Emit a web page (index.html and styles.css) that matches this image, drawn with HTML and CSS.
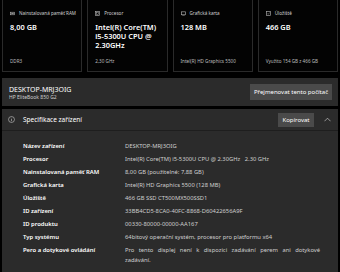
FILE: index.html
```html
<!DOCTYPE html>
<html lang="cs">
<head>
    <meta charset="UTF-8">
    <title>Informace o systému</title>
    <link rel="stylesheet" href="styles.css">
</head>
<body>

    <!-- Summary cards -->
    <div class="cards">
        <div class="card">
            <div class="card-label">
                <svg class="card-icon" viewBox="0 0 6 6"><rect x="0.5" y="1.5" width="5" height="3" fill="none" stroke="#aaa" stroke-width="0.8"/><rect x="1.5" y="2.5" width="3" height="1" fill="#aaa"/></svg>
                Nainstalovaná paměť RAM
            </div>
            <div class="card-value">8,00 GB</div>
            <div class="card-foot">DDR3</div>
        </div>
        <div class="card">
            <div class="card-label">
                <svg class="card-icon" viewBox="0 0 6 6"><rect x="0.5" y="0.5" width="5" height="5" fill="none" stroke="#aaa" stroke-width="0.8"/><rect x="2" y="2" width="2" height="2" fill="none" stroke="#aaa" stroke-width="0.6"/></svg>
                Procesor
            </div>
            <div class="card-value">Intel(R) Core(TM) i5-5300U CPU @ 2.30GHz</div>
            <div class="card-foot">2,30 GHz</div>
        </div>
        <div class="card">
            <div class="card-label">
                <svg class="card-icon" viewBox="0 0 6 6"><rect x="0.5" y="1" width="5" height="3.5" fill="none" stroke="#aaa" stroke-width="0.8"/><line x1="1.5" y1="5.5" x2="4.5" y2="5.5" stroke="#aaa" stroke-width="0.6"/></svg>
                Grafická karta
            </div>
            <div class="card-value">128 MB</div>
            <div class="card-foot">Intel(R) HD Graphics 5500</div>
        </div>
        <div class="card">
            <div class="card-label">
                <svg class="card-icon" viewBox="0 0 6 6"><rect x="0.5" y="0.5" width="5" height="5" fill="none" stroke="#aaa" stroke-width="0.8"/><path d="M1.6 3 L2.6 4 L4.4 1.8" fill="none" stroke="#aaa" stroke-width="0.6"/></svg>
                Úložiště
            </div>
            <div class="card-value">466 GB</div>
            <div class="card-foot">Využito 154 GB z 466 GB</div>
        </div>
    </div>

    <!-- Rename bar -->
    <div class="rename-bar">
        <div class="pc-name">
            <div class="pc-title">DESKTOP-MRJ3OIG</div>
            <div class="pc-model">HP EliteBook 850 G2</div>
        </div>
        <button class="btn btn-rename">Přejmenovat tento počítač</button>
    </div>

    <!-- Device specs -->
    <div class="specs">
        <div class="specs-head">
            <svg class="info-icon" viewBox="0 0 8 8"><circle cx="4" cy="4" r="3.4" fill="none" stroke="#ddd" stroke-width="0.6"/><line x1="4" y1="3.4" x2="4" y2="6" stroke="#ddd" stroke-width="0.6"/><circle cx="4" cy="2.3" r="0.4" fill="#ddd"/></svg>
            <div class="specs-title">Specifikace zařízení</div>
            <button class="btn btn-copy">Kopírovat</button>
            <svg class="chevron" viewBox="0 0 8 5"><path d="M0.5 4.5 L4 1 L7.5 4.5" fill="none" stroke="#ddd" stroke-width="0.7"/></svg>
        </div>
        <div class="specs-body">
            <div class="row"><div class="key">Název zařízení</div><div class="val">DESKTOP-MRJ3OIG</div></div>
            <div class="row"><div class="key">Procesor</div><div class="val">Intel(R) Core(TM) i5-5300U CPU @ 2.30GHz&nbsp;&nbsp;&nbsp;2.30 GHz</div></div>
            <div class="row"><div class="key">Nainstalovaná paměť RAM</div><div class="val">8,00 GB (použitelné: 7,88 GB)</div></div>
            <div class="row"><div class="key">Grafická karta</div><div class="val">Intel(R) HD Graphics 5500 (128 MB)</div></div>
            <div class="row"><div class="key">Úložiště</div><div class="val">466 GB SSD CT500MX500SSD1</div></div>
            <div class="row"><div class="key">ID zařízení</div><div class="val">33BB4CD5-8CA0-40FC-8868-D60422656A9F</div></div>
            <div class="row"><div class="key">ID produktu</div><div class="val">00330-80000-00000-AA167</div></div>
            <div class="row"><div class="key">Typ systému</div><div class="val">64bitový operační systém, procesor pro platformu x64</div></div>
            <div class="row"><div class="key">Pero a dotykové ovládání</div><div class="val justify">Pro tento displej není k dispozici zadávání perem ani dotykové zadávání.</div></div>
        </div>
    </div>

</body>
</html>
```

FILE: styles.css
```css
* {
    margin: 0;
    padding: 0;
    box-sizing: border-box;
}

body {
    width: 340px;
    height: 272px;
    overflow: hidden;
    background-color: #000;
    color: #fff;
    font-family: 'Noto Sans', 'Open Sans', sans-serif;
}

.cards {
    display: grid;
    grid-template-columns: repeat(4, 1fr);
    gap: 5px;
    padding: 0 2px;
    margin-top: -2px;
}

.card {
    display: flex;
    flex-direction: column;
    height: 74px;
    padding: 11px 2px 7px 7px;
    background-color: #030303;
    border: 1px solid #2a2a2a;
}

.card-label {
    display: flex;
    align-items: center;
    gap: 4px;
    white-space: nowrap;
    font-size: 4.6px;
    color: #cfcfcf;
}

.card-icon {
    width: 5px;
    height: 5px;
    flex-shrink: 0;
}

.card-value {
    margin-top: 7px;
    font-size: 7.4px;
    line-height: 9px;
    font-weight: 600;
}

.card-foot {
    margin-top: auto;
    font-size: 4.6px;
    color: #bdbdbd;
}

.rename-bar {
    display: flex;
    align-items: center;
    justify-content: space-between;
    margin: 6px 2px 0;
    height: 28px;
    padding: 0 6px 0 7px;
    background-color: #2b2b2b;
}

.pc-title {
    font-size: 7px;
    line-height: 9px;
}

.pc-model {
    font-size: 5px;
    line-height: 6px;
    color: #cfcfcf;
}

.btn {
    border: none;
    color: #fff;
    background-color: #4a4a4a;
    font-family: inherit;
}

.btn-rename {
    width: 82px;
    height: 16px;
    font-size: 6px;
}

.specs {
    margin: 3px 2px 0;
    background-color: #2b2b2b;
    height: 170px;
}

.specs-head {
    display: flex;
    align-items: center;
    height: 22px;
    padding: 0 6px 0 6px;
    border-bottom: 1px solid #1e1e1e;
}

.info-icon {
    width: 7px;
    height: 7px;
}

.specs-title {
    margin-left: 8px;
    font-size: 6.5px;
    flex: 1;
}

.btn-copy {
    width: 36px;
    height: 14px;
    font-size: 6px;
}

.chevron {
    width: 7px;
    height: 5px;
    margin-left: 10px;
    margin-right: 1px;
}

.specs-body {
    padding: 11px 18px 0 21px;
}

.row {
    display: grid;
    grid-template-columns: 102px 1fr;
    min-height: 13px;
    font-size: 5.8px;
    line-height: 9.5px;
}

.key {
    font-size: 5.9px;
    font-weight: 600;
}

.val {
    color: #cfcfcf;
}

.justify {
    text-align: justify;
}
```
